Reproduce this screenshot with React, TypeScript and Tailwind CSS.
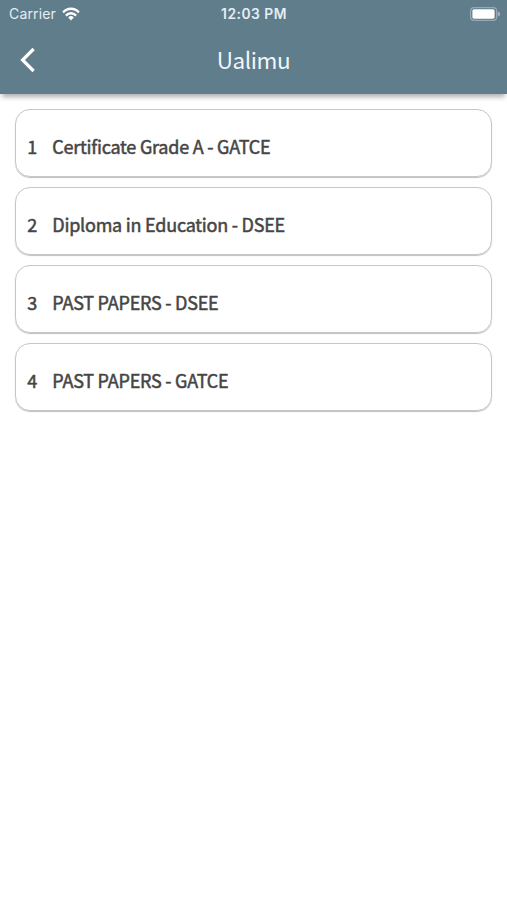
interface Course { id: number; name: string; }

const courses: Course[] = [
  { id: 1, name: "Certificate Grade A - GATCE" },
  { id: 2, name: "Diploma in Education - DSEE" },
  { id: 3, name: "PAST PAPERS - DSEE" },
  { id: 4, name: "PAST PAPERS - GATCE" },
];

function WifiIcon() {
  return (
    <svg width="18" height="14" viewBox="0 0 20 14" preserveAspectRatio="none" fill="none" stroke="white" strokeWidth="2.5">
      <path d="M1.2 5.3a12.5 12.5 0 0 1 17.6 0" />
      <path d="M4.3 8.6a8.1 8.1 0 0 1 11.4 0" />
      <path d="M10 13.6 6.9 10.5a4.5 4.5 0 0 1 6.2 0Z" fill="white" stroke="none" />
    </svg>
  );
}

function BatteryIcon() {
  return (
    <svg width="31" height="14" viewBox="0 0 31 14">
      <rect x="0.6" y="0.6" width="26" height="12.8" rx="3.4" fill="none" stroke="white" strokeOpacity="0.35" strokeWidth="1.2" />
      <rect x="2.4" y="2.3" width="22.2" height="9.4" rx="1.6" fill="white" />
      <path d="M27.8 4.6c1.6.5 2.4 1.4 2.4 2.4s-.8 1.9-2.4 2.4Z" fill="white" fillOpacity="0.4" />
    </svg>
  );
}

function StatusBar() {
  return (
    <div className="grid grid-cols-3 items-center h-[27px] pl-[9px] pr-[6px] font-['Inter','Liberation_Sans',sans-serif] text-[#e6eef2]">
      <div className="flex items-center gap-[6px]">
        <span className="text-[14px] tracking-[0.15px]">Carrier</span>
        <WifiIcon />
      </div>
      <span className="text-center text-[13.8px] font-semibold tracking-[0.5px] pt-px pr-[2px]">12:03 PM</span>
      <div className="flex justify-end">
        <BatteryIcon />
      </div>
    </div>
  );
}

export default function App() {
  return (
    <div className="min-h-screen bg-white font-['Noto_Sans_CJK_JP','Noto_Sans',sans-serif]">
      <header className="h-[94px] bg-[#607d8c] shadow-[0_5px_5px_-2px_rgba(0,0,0,0.32)]">
        <StatusBar />
        <div className="grid grid-cols-3 items-center h-[66px] px-5">
          <button aria-label="Back" className="justify-self-start">
            <svg width="16" height="26" viewBox="0 0 16 26" fill="none" stroke="white" strokeWidth="3.2">
              <path d="M13.6 2 2.6 13l11 11" />
            </svg>
          </button>
          <h1 className="text-center text-[22.5px] tracking-[-0.4px] text-[#f1f6fa]">Ualimu</h1>
        </div>
      </header>

      <main className="flex flex-col gap-[10.2px] px-[15.3px] pt-[14.6px]">
        {courses.map((c) => (
          <div
            key={c.id}
            className="flex items-center h-[68px] pt-[7px] pl-[11px] rounded-[15px] border-[1.5px] border-[#c6c6c6] shadow-[0_1px_1px_rgba(0,0,0,0.25)] text-[18px] tracking-[-0.23px] text-[#454545] [-webkit-text-stroke:0.5px_#454545]"
          >
            <span className="w-[25px]">{c.id}</span>
            <span>{c.name}</span>
          </div>
        ))}
      </main>
    </div>
  );
}
